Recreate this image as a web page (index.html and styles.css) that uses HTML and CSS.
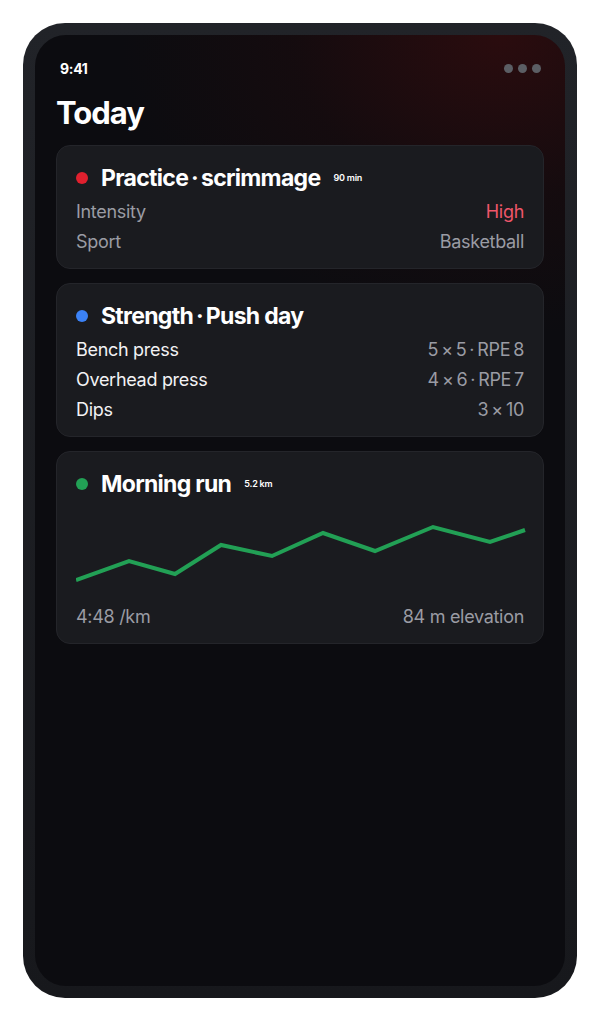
FILE: index.html
```html
<!DOCTYPE html>
<html>
<head>
<meta charset="utf-8">
<link rel="stylesheet" href="styles.css">
</head>
<body>
<div class="phone">
  <div class="screen">
    <div class="status">
      <span class="time">9:41</span>
      <span class="dots"><i></i><i></i><i></i></span>
    </div>
    <h1 class="title">Today</h1>
    <div class="cards">
      <div class="card">
        <div class="card-head">
          <span class="dot red"></span>
          <span class="card-title">Practice&#8201;·&#8201;scrimmage</span>
          <span class="badge">90 min</span>
        </div>
        <div class="row muted"><span>Intensity</span><span class="high">High</span></div>
        <div class="row muted"><span>Sport</span><span>Basketball</span></div>
      </div>
      <div class="card">
        <div class="card-head">
          <span class="dot blue"></span>
          <span class="card-title">Strength&#8201;·&#8201;Push day</span>
        </div>
        <div class="row"><span>Bench press</span><span class="val">5&#8201;×&#8201;5&#8201;·&#8201;RPE&#8201;8</span></div>
        <div class="row"><span>Overhead press</span><span class="val">4&#8201;×&#8201;6&#8201;·&#8201;RPE&#8201;7</span></div>
        <div class="row"><span>Dips</span><span class="val">3&#8201;×&#8201;10</span></div>
      </div>
      <div class="card">
        <div class="card-head">
          <span class="dot green"></span>
          <span class="card-title">Morning run</span>
          <span class="badge">5.2 km</span>
        </div>
        <svg class="chart" viewBox="0 0 450 99" width="450" height="99">
          <polyline points="0,78 53,59 99,72 145,43 196,54 247,31 299,49 357,25 414,40 449,28" fill="none" stroke="#22a055" stroke-width="4" stroke-linejoin="miter"/>
        </svg>
        <div class="row muted foot"><span>4:48 /km</span><span>84 m elevation</span></div>
      </div>
    </div>
  </div>
</div>
</body>
</html>
```
FILE: styles.css
```css
* { box-sizing: border-box; }
html, body { margin: 0; padding: 0; background: #ffffff; }
body { font-family: Inter, "Noto Sans", sans-serif; }
.phone {
  margin: 23px;
  width: 554px;
  height: 975px;
  border-radius: 42px;
  background: linear-gradient(#212328, #17181c);
  padding: 12px;
}
.screen {
  height: 100%;
  border-radius: 31px;
  background:
    radial-gradient(ellipse 380px 300px at 88% 0%, rgba(48, 12, 14, 0.85), rgba(36, 10, 12, 0.35) 55%, rgba(12, 12, 16, 0) 100%),
    #0c0c10;
  padding: 24px 21px 0 21px;
  overflow: hidden;
}
.status {
  display: flex;
  justify-content: space-between;
  align-items: center;
  height: 18px;
}
.time {
  color: #fff;
  font-weight: 700;
  font-size: 14px;
  padding-left: 4px;
  letter-spacing: -0.3px;
}
.dots { display: flex; gap: 5px; padding-right: 3px; }
.dots i {
  width: 9px; height: 9px; border-radius: 50%;
  background: #5b5e64; display: block;
}
.title {
  margin: 18px 0 0 0;
  color: #fff;
  font-size: 31px;
  font-weight: 700;
  letter-spacing: -1px;
  line-height: 36px;
}
.cards {
  margin-top: 14px;
  display: flex;
  flex-direction: column;
  gap: 14px;
}
.card {
  background: #1a1b1f;
  border: 1px solid #24252a;
  border-radius: 14px;
  padding: 17px 19px 12px 19px;
}
.card-head {
  display: flex;
  align-items: center;
  height: 30px;
  margin-bottom: 3px;
}
.dot { width: 12px; height: 12px; border-radius: 50%; margin-right: 13px; }
.red { background: #e0202e; }
.blue { background: #3b82f6; }
.green { background: #22a055; }
.card-title {
  color: #fff;
  font-weight: 700;
  font-size: 23px;
  letter-spacing: -0.7px;
}
.badge {
  color: #fff;
  font-size: 9px;
  font-weight: 600;
  margin-left: 13px;
  margin-top: -2px;
  letter-spacing: -0.2px;
}
.row {
  display: flex;
  justify-content: space-between;
  height: 30px;
  align-items: center;
  font-size: 18px;
  color: #f2f2f4;
  letter-spacing: -0.3px;
}
.row.muted { color: #9a9ca4; }
.val { color: #9a9ca4; }
.high { color: #f0566a; }
.chart { display: block; margin-top: 0; width: 450px; height: 99px; }
.foot { margin-top: 0; }
```
